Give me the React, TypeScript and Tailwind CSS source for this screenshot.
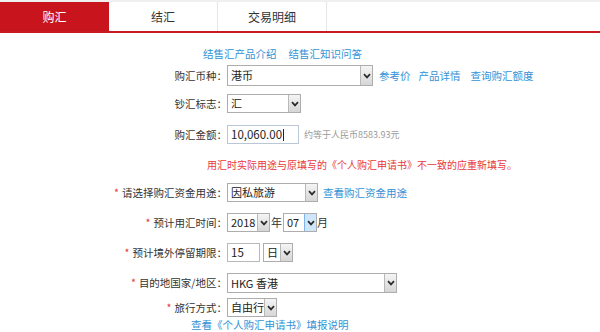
import React from 'react';

const font = { fontFamily: '"Noto Sans CJK SC", "Noto Sans", sans-serif' };

// Windows-style grey arrow button of a drop-down
const Arrow = ({ active = false }: { active?: boolean }) => (
  <span
    className={`flex h-full w-[12px] shrink-0 items-center justify-center border-l ${
      active ? 'border-[#7eb4ea] bg-[#cfe6fa]' : 'border-[#b8b8b8] bg-gradient-to-b from-[#f5f5f5] to-[#d6d6d6]'
    }`}
  >
    <svg width="8" height="6" viewBox="0 0 8 6">
      <path d="M1 1.2 L4 4.4 L7 1.2" stroke="#2b2b2b" strokeWidth="1.7" fill="none" />
    </svg>
  </span>
);

const Select = ({
  value,
  width,
  height = 'h-[19px]',
  active,
}: {
  value: string;
  width: string;
  height?: string;
  active?: boolean;
}) => (
  <div className={`flex ${width} ${height} items-stretch border border-[#adadad] bg-white`}>
    <span className="flex flex-1 items-center overflow-hidden whitespace-nowrap pl-[3px] text-[11px] text-[#222]">
      {value}
    </span>
    <Arrow active={active} />
  </div>
);

const Label = ({ text, required }: { text: string; required?: boolean }) => (
  <div className="w-[227px] shrink-0 whitespace-nowrap text-right text-[10.5px] text-[#333]">
    {required && <span className="mr-[3px] text-[#e23a3a]">*</span>}
    {text}：
  </div>
);

const Link = ({ children, className = '' }: { children: React.ReactNode; className?: string }) => (
  <span className={`text-[10.5px] text-[#3392d6] ${className}`}>{children}</span>
);

export default function App() {
  const tabs = ['购汇', '结汇', '交易明细'];

  return (
    <div className="h-[332px] w-[600px] overflow-hidden bg-white" style={font}>
      <div className="h-[2px] bg-[#f0f0f0]" />

      {/* tabs */}
      <div className="flex h-[31px] border-b-2 border-[#c81a22]">
        {tabs.map((t, i) => (
          <div
            key={t}
            className={`flex w-[109px] items-center justify-center text-[12px] ${
              i === 0 ? 'bg-[#c8141c] text-white' : 'border-r border-[#e6e6e6] text-[#333]'
            }`}
          >
            {t}
          </div>
        ))}
      </div>

      {/* help links */}
      <div className="mt-[14px] flex h-[14px] items-center pl-[203px] leading-[14px]">
        <Link>结售汇产品介绍</Link>
        <Link className="ml-[12px]">结售汇知识问答</Link>
      </div>

      {/* currency */}
      <div className="mt-[4px] flex h-[21px] items-center">
        <Label text="购汇币种" />
        <Select value="港币" width="w-[146px]" height="h-[21px]" />
        <Link className="ml-[6px]">参考价</Link>
        <Link className="ml-[8px]">产品详情</Link>
        <Link className="ml-[10px]">查询购汇额度</Link>
      </div>

      {/* cash / spot */}
      <div className="mt-[8px] flex h-[19px] items-center">
        <Label text="钞汇标志" />
        <Select value="汇" width="w-[74px]" />
      </div>

      {/* amount */}
      <div className="mt-[12px] flex h-[19px] items-center">
        <Label text="购汇金额" />
        <div className="flex h-[19px] w-[72px] items-center border border-[#b9c7d6] bg-white pl-[3px] text-[11.5px] text-[#222]">
          10,060.00<span className="ml-[1px] h-[12px] w-px bg-[#222]" />
        </div>
        <span className="ml-[5px] text-[9px] text-[#9a9a9a]">约等于人民币8583.93元</span>
      </div>

      {/* warning */}
      <div className="mt-[14px] flex h-[14px] items-center pl-[207px] text-[10px] leading-[14px] text-[#e8383b]">
        用汇时实际用途与原填写的《个人购汇申请书》不一致的应重新填写。
      </div>

      {/* purpose */}
      <div className="mt-[11px] flex h-[19px] items-center">
        <Label text="请选择购汇资金用途" required />
        <Select value="因私旅游" width="w-[91px]" />
        <Link className="ml-[5px]">查看购汇资金用途</Link>
      </div>

      {/* time */}
      <div className="mt-[11px] flex h-[19px] items-center">
        <Label text="预计用汇时间" required />
        <Select value="2018" width="w-[43px]" />
        <span className="mx-[1px] text-[11px] text-[#333]">年</span>
        <Select value="07" width="w-[34px]" active />
        <span className="text-[11px] text-[#333]">月</span>
      </div>

      {/* stay */}
      <div className="mt-[11px] flex h-[19px] items-center">
        <Label text="预计境外停留期限" required />
        <div className="flex h-[19px] w-[33px] items-center border border-[#b9b9b9] bg-white pl-[3px] text-[11.5px] text-[#222]">
          15
        </div>
        <div className="ml-[3px]">
          <Select value="日" width="w-[30px]" />
        </div>
      </div>

      {/* destination */}
      <div className="mt-[11px] flex h-[20px] items-center">
        <Label text="目的地国家/地区" required />
        <Select value="HKG 香港" width="w-[170px]" height="h-[20px]" />
      </div>

      {/* travel mode */}
      <div className="mt-[5px] flex h-[19px] items-center">
        <Label text="旅行方式" required />
        <Select value="自由行" width="w-[50px]" />
      </div>

      <div className="mt-[1px] flex h-[14px] items-center pl-[191px] leading-[14px]">
        <Link>查看《个人购汇申请书》填报说明</Link>
      </div>
    </div>
  );
}
